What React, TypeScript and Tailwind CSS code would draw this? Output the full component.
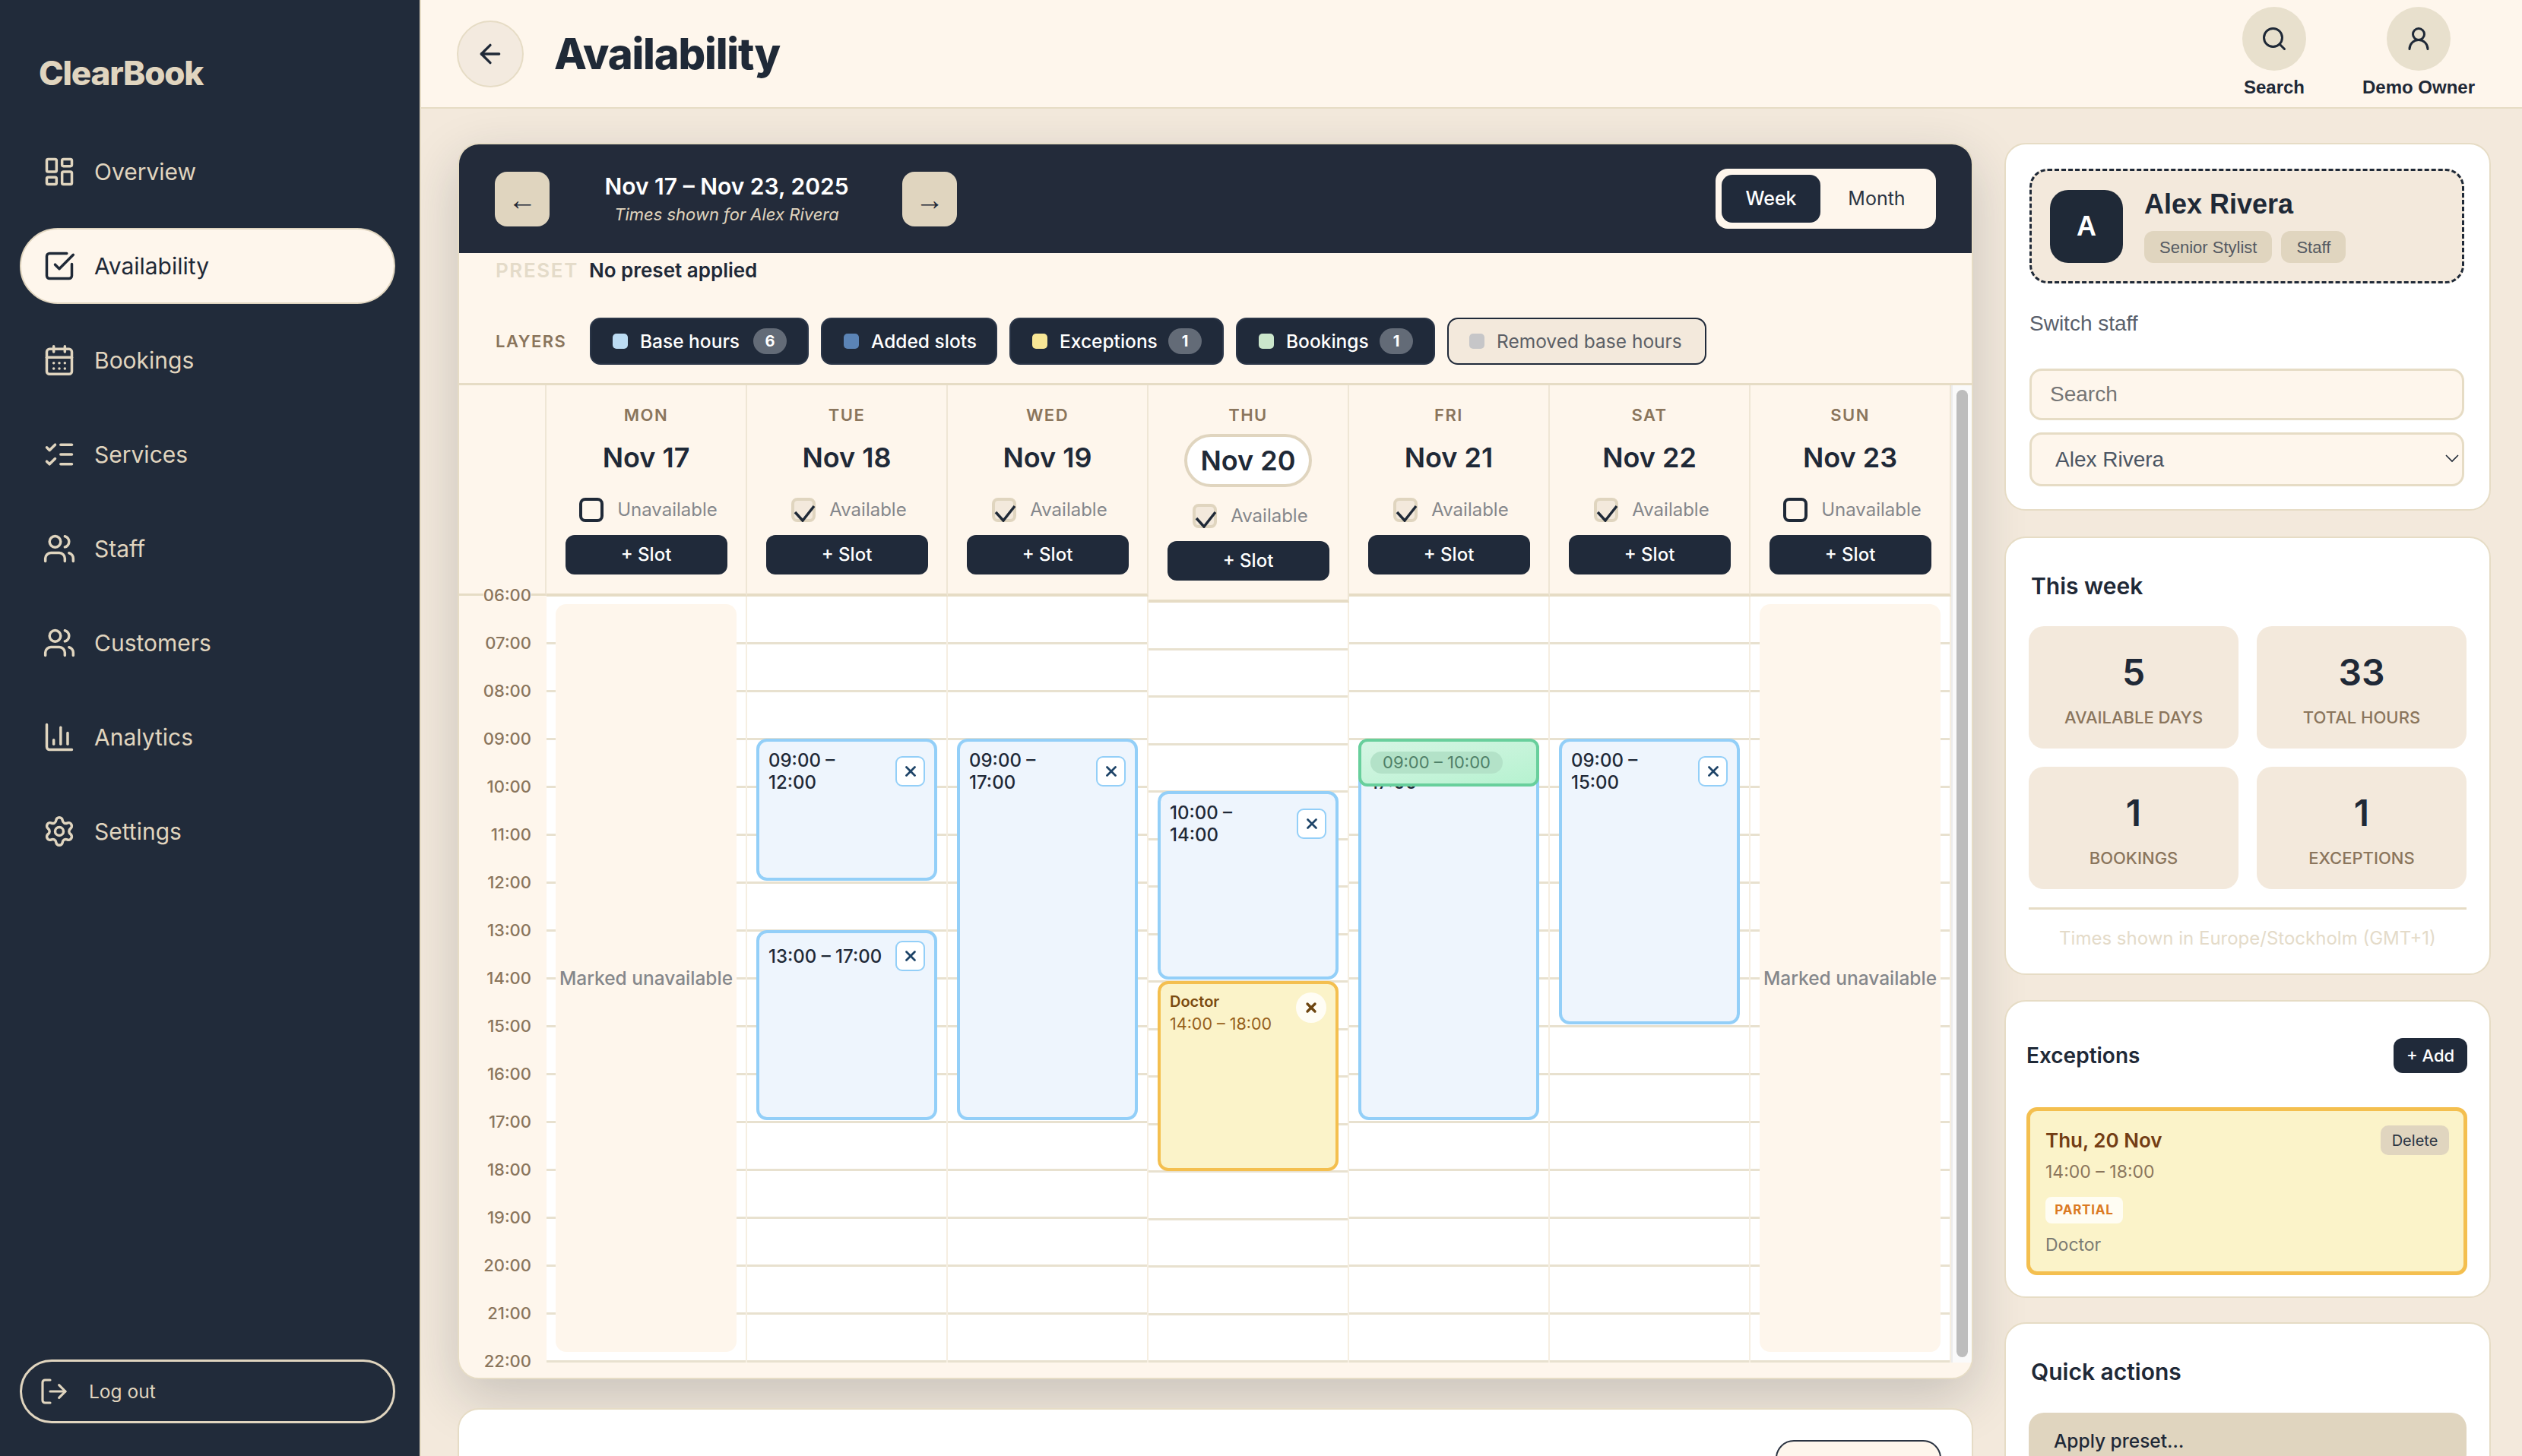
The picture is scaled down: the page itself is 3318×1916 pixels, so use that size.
import {
  ArrowLeft,
  CalendarDays,
  ChartColumn,
  LayoutDashboard,
  ListChecks,
  LogOut,
  Search,
  Settings,
  SquareCheckBig,
  UserRound,
  Users,
  X,
} from "lucide-react";

const navItems = [
  { label: "Overview", icon: LayoutDashboard },
  { label: "Availability", icon: SquareCheckBig, active: true },
  { label: "Bookings", icon: CalendarDays },
  { label: "Services", icon: ListChecks },
  { label: "Staff", icon: Users },
  { label: "Customers", icon: Users },
  { label: "Analytics", icon: ChartColumn },
  { label: "Settings", icon: Settings },
];

const layers = [
  { label: "Base hours", swatch: "bg-[#bcdcf3]", width: "w-[288px]", count: 6 },
  { label: "Added slots", swatch: "bg-[#5b84b6]", width: "w-[232px]" },
  { label: "Exceptions", swatch: "bg-[#f8e796]", width: "w-[282px]", count: 1 },
  { label: "Bookings", swatch: "bg-[#cbe6cb]", width: "w-[262px]", count: 1 },
];

type Slot = { start: number; end: number; label: string };

type Day = {
  name: string;
  date: string;
  available: boolean;
  today?: boolean;
  slots: Slot[];
  exception?: { start: number; end: number };
  booking?: { start: number; end: number };
};

const days: Day[] = [
  { name: "MON", date: "Nov 17", available: false, slots: [] },
  {
    name: "TUE",
    date: "Nov 18",
    available: true,
    slots: [
      { start: 9, end: 12, label: "09:00 – 12:00" },
      { start: 13, end: 17, label: "13:00 – 17:00" },
    ],
  },
  { name: "WED", date: "Nov 19", available: true, slots: [{ start: 9, end: 17, label: "09:00 – 17:00" }] },
  {
    name: "THU",
    date: "Nov 20",
    available: true,
    today: true,
    slots: [{ start: 10, end: 14, label: "10:00 – 14:00" }],
    exception: { start: 14, end: 18 },
  },
  {
    name: "FRI",
    date: "Nov 21",
    available: true,
    slots: [{ start: 9, end: 17, label: "09:00 – 17:00" }],
    booking: { start: 9, end: 10 },
  },
  { name: "SAT", date: "Nov 22", available: true, slots: [{ start: 9, end: 15, label: "09:00 – 15:00" }] },
  { name: "SUN", date: "Nov 23", available: false, slots: [] },
];

const hours = Array.from({ length: 16 }, (_, i) => i + 6);

const stats = [
  { value: "5", label: "AVAILABLE DAYS" },
  { value: "33", label: "TOTAL HOURS" },
  { value: "1", label: "BOOKINGS" },
  { value: "1", label: "EXCEPTIONS" },
];

// events sit on the hour grid, which is 16 rows tall
const placeEvent = (start: number, end: number, extra = 2) => ({
  top: `calc(${((start - 6) / 16) * 100}% - 2px)`,
  height: `calc(${((end - start) / 16) * 100}% - ${extra}px)`,
});

function DayColumn({ day }: { day: Day }) {
  return (
    <div className="flex w-[264px] flex-col">
      {/* HEADER */}
      <div className="flex flex-col items-center border-r-2 border-b-[4px] border-r-[#efe6d5] border-b-[#e6dcc5] pt-[26px] pb-[25px]">
        <div className="text-[22px] leading-[26px] font-semibold tracking-[1.5px] text-[#8a755c]">{day.name}</div>
        {day.today ? (
          <div className="mt-[12px] flex h-[70px] items-center rounded-full border-[4px] border-[#e0d5bf] bg-white px-[18px] text-[36px] font-semibold text-[#1f2937]">
            {day.date}
          </div>
        ) : (
          <div className="mt-[12px] flex h-[62px] items-center text-[36px] font-semibold text-[#1f2937]">{day.date}</div>
        )}
        <div className="mt-[22px] flex h-[32px] items-center gap-[18px] pl-[6px]">
          {day.available ? (
            <div className="h-[32px] w-[32px] rounded-[8px] border-[4px] border-[#e0d5bf] bg-[#f3e9dc]">
              <svg viewBox="0 0 32 32" className="-mt-[4px] -ml-[4px] h-[32px] w-[32px]" fill="none" stroke="#1f2937" strokeWidth="3.5">
                <path d="M5 19l10 11L30 11" />
              </svg>
            </div>
          ) : (
            <div className="h-[32px] w-[32px] rounded-[8px] border-[4px] border-[#1f2937] bg-[#fef6ec]" />
          )}
          <span className="text-[24px] text-[#85878b]">{day.available ? "Available" : "Unavailable"}</span>
        </div>
        <button className="mt-[17px] h-[52px] w-[213px] rounded-[12px] bg-[#202a3a] text-[24px] font-medium text-white">
          + Slot
        </button>
      </div>

      {/* BODY */}
      <div className="relative flex flex-1 flex-col border-r-2 border-[#f5eee1] bg-white">
        {hours.map((h) => (
          <div key={h} className="flex-1 border-b-[3px] border-[#e8e1cf]" />
        ))}

        {!day.available && (
          <div className="absolute top-[10px] right-[12px] bottom-[14px] left-[12px] flex items-center justify-center rounded-[14px] bg-[#fef6ec] text-[24.5px] font-medium whitespace-nowrap text-[#85878b]">
            Marked unavailable
          </div>
        )}

        {day.slots.map((slot) => (
          <div
            key={slot.label}
            className="absolute right-[12px] left-[12px] rounded-[14px] border-[4px] border-[#93cff8] bg-[#eef5fd] px-[12px] pt-[10px]"
            style={placeEvent(slot.start, slot.end)}
          >
            <div className="flex items-center justify-between">
              <div className="w-[151px] text-[24px] leading-[29px] font-medium text-[#1f2937]">{slot.label}</div>
              <button className="flex h-[40px] w-[39px] shrink-0 items-center justify-center rounded-[9px] border-2 border-[#93cff8] bg-white text-[#1e4468]">
                <X size={22} strokeWidth={3} />
              </button>
            </div>
          </div>
        ))}

        {day.exception && (
          <div
            className="absolute right-[12px] left-[12px] flex items-start justify-between rounded-[14px] border-[4px] border-[#f4bf4f] bg-[#fbf3c9] px-[12px] pt-[11px]"
            style={placeEvent(day.exception.start, day.exception.end, 0)}
          >
            <div className="-mt-[2px] leading-[29px]">
              <div className="text-[20px] font-semibold text-[#7a4a10]">Doctor</div>
              <div className="text-[21.5px] text-[#96601a]">14:00 – 18:00</div>
            </div>
            <button className="flex h-[40px] w-[40px] items-center justify-center rounded-full bg-[#fffdf5] text-[#6d4510]">
              <X size={20} strokeWidth={4} />
            </button>
          </div>
        )}

        {day.booking && (
          <div
            className="absolute right-[12px] left-[12px] flex items-center rounded-[12px] border-[4px] border-[#68cf9c] bg-gradient-to-br from-[#d6f5e4] to-[#b6f2d0] pl-[12px]"
            style={placeEvent(day.booking.start, day.booking.end, 0)}
          >
            <span className="rounded-full bg-[#b3e2c8] px-[16px] text-[22px] leading-[29px] text-[#4f8068]">
              09:00 – 10:00
            </span>
          </div>
        )}
      </div>
    </div>
  );
}

function Calendar() {
  return (
    <div className="shrink-0 overflow-hidden rounded-[28px] border-2 border-[#e6dcc5] bg-[#fef6ec] shadow-[0_24px_70px_rgba(31,41,55,0.2)]">
      {/* WEEK NAV */}
      <div className="flex h-[143px] items-center justify-between bg-[#232b3a] pr-[47px] pl-[47px]">
        <div className="flex items-center">
          <button className="flex h-[72px] w-[72px] items-center justify-center rounded-[16px] bg-[#e0d5bf] pt-[4px] font-['Liberation_Sans',sans-serif] text-[38px] text-[#1f2937]">
            ←
          </button>
          <div className="flex w-[464px] flex-col items-center pl-[2px]">
            <div className="text-[30px] leading-[40px] font-semibold text-white">Nov 17 – Nov 23, 2025</div>
            <div className="mt-[1px] text-[22px] leading-[32px] text-[#e0d5bf] italic">Times shown for Alex Rivera</div>
          </div>
          <button className="flex h-[72px] w-[72px] items-center justify-center rounded-[16px] bg-[#e0d5bf] pt-[4px] font-['Liberation_Sans',sans-serif] text-[38px] text-[#1f2937]">
            →
          </button>
        </div>
        <div className="flex h-[79px] w-[290px] items-center rounded-[16px] bg-[#fef6ec] p-[8px] text-[25px]">
          <div className="flex h-[63px] w-[130px] items-center justify-center rounded-[14px] bg-[#202a3a] font-medium text-white">
            Week
          </div>
          <div className="flex-1 pl-[4px] text-center text-[#2b3442]">Month</div>
        </div>
      </div>

      {/* PRESET */}
      <div className="flex h-[44px] items-center gap-[14px] pl-[48px]">
        <span className="text-[26px] font-semibold tracking-[1.6px] text-[#e4dbc9]">PRESET</span>
        <span className="text-[26px] font-semibold text-[#1f2937]">No preset applied</span>
      </div>

      {/* LAYERS */}
      <div className="flex items-center border-b-[3px] border-[#e6dcc5] pt-[41px] pb-[24px] pl-[48px]">
        <span className="mr-[33px] w-[91px] text-[22px] font-semibold tracking-[1.5px] text-[#8a755c]">LAYERS</span>
        <div className="flex gap-[16px]">
          {layers.map((layer) => (
            <div
              key={layer.label}
              className={`flex h-[62px] items-center rounded-[14px] border-2 border-[#2b3648] bg-[#202a3a] pl-[28px] text-[24.5px] font-medium text-white ${layer.width}`}
            >
              <span className={`mr-[16px] h-[20px] w-[20px] rounded-[5px] ${layer.swatch}`} />
              {layer.label}
              {layer.count && (
                <span className="mr-[27px] ml-auto flex h-[34px] w-[44px] items-center justify-center rounded-full bg-[#636b77] text-[20px] font-bold">
                  {layer.count}
                </span>
              )}
            </div>
          ))}
          <div className="flex h-[62px] w-[341px] items-center rounded-[14px] border-2 border-[#202a3a] bg-[#f3e9dc] pl-[27px] text-[24.5px] text-[#5b5f66]">
            <span className="mr-[16px] h-[20px] w-[20px] rounded-[5px] bg-[#c6c6c8]" />
            Removed base hours
          </div>
        </div>
      </div>

      {/* GRID */}
      <div className="flex h-[1286px]">
        <div className="flex w-[115px] shrink-0 flex-col">
          <div className="h-[277px] shrink-0 border-r-2 border-b-[3px] border-r-[#efe6d5] border-b-[#e6dcc5]" />
          <div className="-mt-[1px] flex flex-col">
            {hours.map((h) => (
              <div key={h} className="relative h-[63px] text-right">
                <span className="absolute top-0 right-[20px] -translate-y-1/2 bg-[#fef6ec] text-[22px] font-medium text-[#8a755c]">
                  {String(h).padStart(2, "0")}:00
                </span>
              </div>
            ))}
            <div className="relative h-0">
              <span className="absolute top-0 right-[20px] -translate-y-1/2 text-[22px] font-medium text-[#8a755c]">22:00</span>
            </div>
          </div>
        </div>
        {days.map((day) => (
          <DayColumn key={day.name} day={day} />
        ))}
        <div className="flex flex-1 justify-center border-l-2 border-[#ececec] bg-[#fafafa] pt-[6px] pb-[7px]">
          <div className="w-[15px] rounded-full bg-[#bdbdbd]" />
        </div>
      </div>
      <div className="h-[20px]" />
    </div>
  );
}

function Sidebar() {
  return (
    <aside className="flex w-[554px] shrink-0 flex-col border-r-2 border-[#e6dcc5] bg-[#212b3a] pb-[43px]">
      <div className="pt-[64px] pl-[51px] text-[44px] leading-[64px] font-extrabold tracking-[-1.2px] text-[#e0d5bf]">ClearBook</div>
      <nav className="mt-[48px] flex flex-col gap-[24px] pr-[32px] pl-[26px]">
        {navItems.map(({ label, icon: Icon, active }) => (
          <div
            key={label}
            className={
              active
                ? "flex h-[100px] items-center gap-[24px] rounded-full border-2 border-[#e0d5bf] bg-[#fef6ec] pl-[28px] text-[30px] text-[#1f2937]"
                : "flex h-[100px] items-center gap-[24px] rounded-full border-2 border-transparent pl-[28px] text-[30px] text-[#e0d5bf]"
            }
          >
            <Icon size={44} strokeWidth={1.9} />
            {label}
          </div>
        ))}
      </nav>
      <div className="mt-auto mr-[32px] ml-[26px] flex h-[84px] items-center gap-[26px] rounded-full border-[3px] border-[#e0d5bf] pl-[22px] text-[24.5px] text-[#e0d5bf]">
        <LogOut size={40} strokeWidth={1.9} />
        Log out
      </div>
    </aside>
  );
}

function RightColumn() {
  return (
    <div className="flex w-[640px] shrink-0 flex-col gap-[34px] font-['Inter',sans-serif]">
      {/* STAFF */}
      <div className="h-[484px] shrink-0 rounded-[28px] border-2 border-[#e6dcc5] bg-white pt-[32px] pr-[33px] pl-[31px] font-['Liberation_Sans',sans-serif]">
        <div className="flex h-[151px] items-center gap-[28px] rounded-[24px] border-[3px] border-dashed border-[#1f2937] bg-[#f3e9dc] pl-[24px]">
          <div className="flex h-[96px] w-[96px] items-center justify-center rounded-[24px] bg-[#1f2937] text-[36px] font-bold text-white">
            A
          </div>
          <div>
            <div className="-mt-[2px] text-[36px] leading-[44px] font-bold text-[#1f2937]">Alex Rivera</div>
            <div className="mt-[13px] flex gap-[12px]">
              <span className="flex h-[42px] items-center rounded-[12px] bg-[#e0d5bf] px-[20px] text-[22px] text-[#555a62]">Senior Stylist</span>
              <span className="flex h-[42px] items-center rounded-[12px] bg-[#e0d5bf] px-[20px] text-[22px] text-[#555a62]">Staff</span>
            </div>
          </div>
        </div>
        <div className="mt-[35px] text-[28px] leading-[36px] text-[#59606b]">Switch staff</div>
        <input
          placeholder="Search"
          className="mt-[41px] block h-[68px] w-full rounded-[16px] border-[3px] border-[#e6dcc5] bg-[#fef6ec] pl-[24px] text-[28px] placeholder:text-[#757575]"
        />
        <div className="relative mt-[16px]">
          <select className="block h-[71px] w-full appearance-none rounded-[16px] border-[3px] border-[#e6dcc5] bg-[#fef6ec] pl-[31px] text-[28px] text-[#4b5563]">
            <option>Alex Rivera</option>
          </select>
          <svg viewBox="0 0 18 11" className="absolute top-[29px] right-[7px] h-[11px] w-[18px]" fill="none" stroke="#1f2937" strokeWidth="1.6">
            <path d="M1 1l8 8 8-8" />
          </svg>
        </div>
      </div>

      {/* THIS WEEK */}
      <div className="h-[577px] shrink-0 rounded-[28px] border-2 border-[#e6dcc5] bg-white px-[30px]">
        <div className="pt-[42px] pl-[3px] text-[30px] leading-[42px] font-semibold text-[#1f2937]">This week</div>
        <div className="mt-[32px] grid grid-cols-2 gap-[24px]">
          {stats.map((stat) => (
            <div key={stat.label} className="flex h-[161px] flex-col items-center rounded-[20px] bg-[#f3e9dc] pt-[26px]">
              <div className="text-[48px] leading-[70px] font-semibold text-[#1f2937]">{stat.value}</div>
              <div className="mt-[9px] text-[22px] leading-[30px] font-medium text-[#8a755c]">{stat.label}</div>
            </div>
          ))}
        </div>
        <div className="mt-[24px] border-t-[3px] border-[#e6dcc5] pt-[22px] text-center text-[24px] leading-[32px] text-[#e4dbc9]">
          Times shown in Europe/Stockholm (GMT+1)
        </div>
      </div>

      {/* EXCEPTIONS */}
      <div className="-mt-[1px] h-[392px] shrink-0 rounded-[28px] border-2 border-[#e6dcc5] bg-white pt-[48px] pr-[29px] pl-[27px]">
        <div className="flex items-center justify-between">
          <span className="text-[28px] font-semibold text-[#1f2937]">Exceptions</span>
          <button className="h-[46px] w-[97px] rounded-[12px] bg-[#202a3a] text-[22px] font-medium text-white">+ Add</button>
        </div>
        <div className="mt-[45px] h-[221px] rounded-[14px] border-[5px] border-[#f4bf4f] bg-[#fbf3c9] pt-[19px] pr-[19px] pl-[20px]">
          <div className="flex items-center justify-between">
            <span className="text-[26px] font-semibold text-[#733d14]">Thu, 20 Nov</span>
            <button className="h-[39px] w-[90px] rounded-[10px] bg-[#e0d5bf] text-[20px] text-[#2b3442]">Delete</button>
          </div>
          <div className="mt-[4px] text-[23px] leading-[36px] text-[#8a755c]">14:00 – 18:00</div>
          <span className="mt-[15px] flex h-[35px] w-[102px] items-center justify-center rounded-[8px] bg-[#fffdf3] text-[17px] font-bold tracking-[0.8px] text-[#db7a23]">
            PARTIAL
          </span>
          <div className="mt-[12px] text-[23px] leading-[32px] text-[#7a7a72]">Doctor</div>
        </div>
      </div>

      {/* QUICK ACTIONS */}
      <div className="-mt-[2px] rounded-t-[28px] border-2 border-[#e6dcc5] bg-white px-[30px] pb-[40px]">
        <div className="pt-[42px] pl-[3px] text-[30px] leading-[42px] font-semibold text-[#1f2937]">Quick actions</div>
        <div className="mt-[33px] flex h-[74px] items-center rounded-[20px] bg-[#e0d5bf] pl-[33px] text-[24.5px] font-medium text-[#1f2937]">
          Apply preset…
        </div>
      </div>
    </div>
  );
}

export default function App() {
  return (
    <div className="flex h-screen overflow-hidden bg-[#f3e9dc] font-['Inter',sans-serif]">
      <Sidebar />
      <div className="flex min-w-0 flex-1 flex-col">
        {/* TOP BAR */}
        <header className="flex h-[143px] shrink-0 items-center justify-between border-b-2 border-[#e6dcc5] bg-[#fef6ec] pr-[94px] pl-[47px]">
          <div className="flex items-center gap-[40px]">
            <button className="flex h-[88px] w-[88px] items-center justify-center rounded-full border-2 border-[#e6dcc5] bg-[#f3eadf] text-[#1f2937]">
              <ArrowLeft size={40} strokeWidth={2} />
            </button>
            <h1 className="text-[56px] font-extrabold tracking-[-1.2px] text-[#1f2937]">Availability</h1>
          </div>
          <div className="flex items-start gap-[106px] self-start pt-[9px] font-['Liberation_Sans',sans-serif] text-[24px] font-bold text-[#1f2937]">
            <div className="flex w-[84px] flex-col items-center">
              <div className="flex h-[84px] w-[84px] items-center justify-center rounded-full bg-[#e8e0cd]">
                <Search size={36} strokeWidth={2} />
              </div>
              <span className="mt-[8px] leading-[28px] whitespace-nowrap">Search</span>
            </div>
            <div className="flex w-[84px] flex-col items-center">
              <div className="flex h-[84px] w-[84px] items-center justify-center rounded-full bg-[#e8e0cd]">
                <UserRound size={36} strokeWidth={2} />
              </div>
              <span className="mt-[8px] leading-[28px] whitespace-nowrap">Demo Owner</span>
            </div>
          </div>
        </header>

        {/* PAGE */}
        <main className="flex min-h-0 flex-1 gap-[41px] overflow-hidden pt-[45px] pl-[48px]">
          <div className="flex w-[1994px] shrink-0 flex-col gap-[38px]">
            <Calendar />
            <div className="relative h-[300px] shrink-0 rounded-t-[28px] border-2 border-[#e6dcc5] bg-white">
              <div className="absolute top-[40px] right-[40px] h-[120px] w-[218px] rounded-[24px] border-2 border-[#2b3442] bg-[#fef6ec]" />
            </div>
          </div>
          <RightColumn />
        </main>
      </div>
    </div>
  );
}
